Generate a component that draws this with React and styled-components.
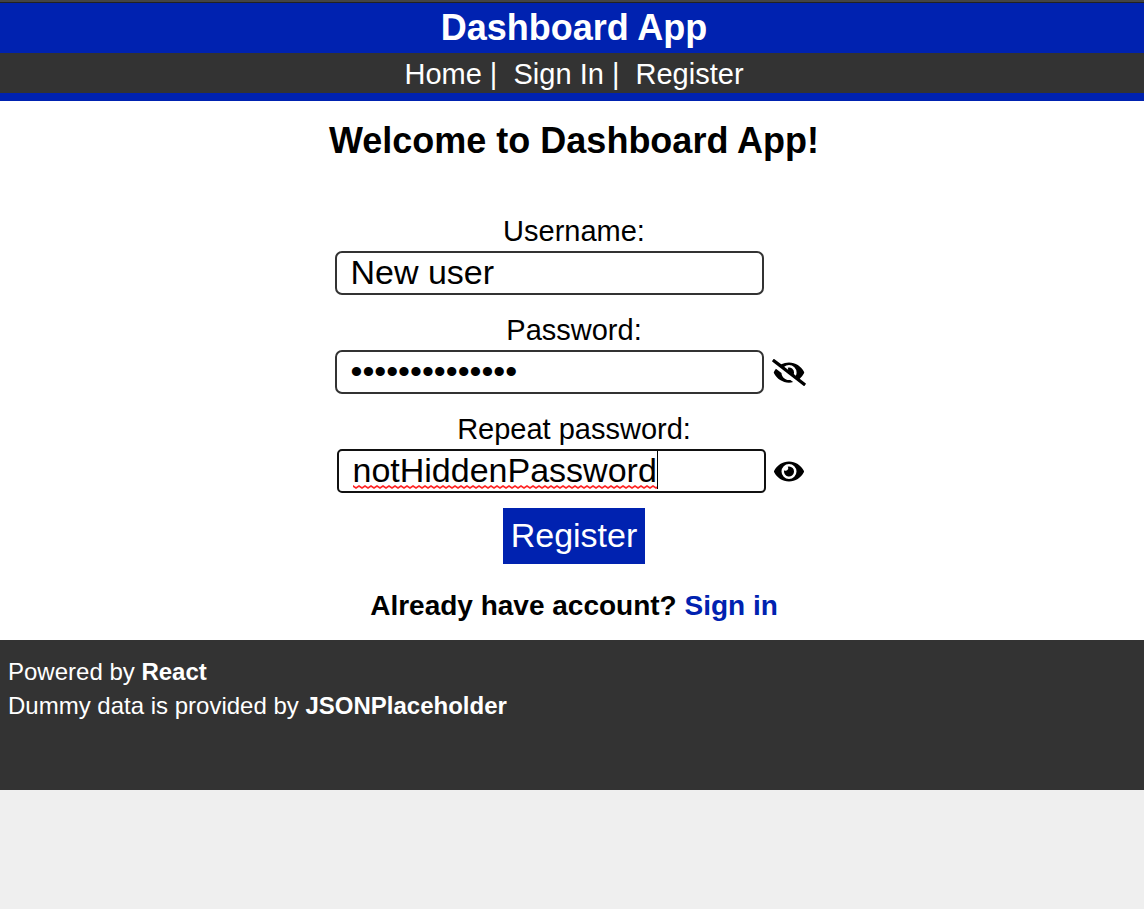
import React, { useState } from "react";
import styled, { createGlobalStyle } from "styled-components";
import { FaEye, FaEyeSlash } from "react-icons/fa";

const blue = "#0022b0";
const dark = "#333333";

const GlobalStyle = createGlobalStyle`
  *, *::before, *::after { box-sizing: border-box; }
  body {
    margin: 0;
    background: #efefef;
    color: #000;
    font-family: "Liberation Sans", Arial, sans-serif;
    font-size: 29px;
  }
`;

const Header = styled.header`
  background: ${blue};
  border-top: 2px solid #444;
  padding-bottom: 8px;
  text-align: center;
  color: #fff;
`;

const Brand = styled.h1`
  margin: 0;
  border-top: 1px solid #222;
  padding-left: 4px;
  font-size: 36px;
  line-height: 50px;
`;

const Nav = styled.nav`
  background: ${dark};
  padding: 2px 0 0 4px;
  line-height: 38px;
`;

const NavLink = styled.a`
  color: #fff;
  text-decoration: none;
`;

const Main = styled.main`
  display: flex;
  flex-direction: column;
  align-items: center;
  padding: 20px 0 17px 4px;
  background: #fff;
`;

const Welcome = styled.h2`
  margin: 0 0 52px;
  font-size: 36px;
  line-height: 40px;
`;

const Form = styled.form`
  display: flex;
  flex-direction: column;
  align-items: center;
  gap: 15px;
`;

const Fields = styled.div`
  display: flex;
  flex-direction: column;
  align-items: center;
  gap: 17px;
`;

const Field = styled.div`
  display: flex;
  flex-direction: column;
  align-items: center;
  gap: 2px;
`;

const Label = styled.label`
  line-height: 36px;
`;

const InputRow = styled.div`
  display: flex;
  align-items: center;
  padding-right: ${(p) => (p.$plain ? "50px" : "0")};
`;

const InputBox = styled.div`
  position: relative;
`;

const Input = styled.input`
  display: block;
  width: 429px;
  max-width: 80vw;
  height: 44px;
  padding: 0 14px 2px;
  border: 2px solid ${(p) => (p.$active ? "#111" : dark)};
  border-radius: ${(p) => (p.$active ? "5px" : "7px")};
  outline: none;
  background: #fff;
  color: #000;
  font: 34px "Liberation Sans", Arial, sans-serif;
`;

const Typing = styled.span`
  position: absolute;
  left: 16px;
  top: 2px;
  display: flex;
  align-items: flex-end;
  height: 38px;
  border-right: 1px solid #000;
  pointer-events: none;
`;

const Toggle = styled.button`
  display: flex;
  padding: 0 8px;
  border: 0;
  background: none;
  color: #000;
  cursor: pointer;

  svg {
    width: ${(p) => (p.$visible ? "30px" : "34px")};
    height: 27px;
  }
`;

const Submit = styled.button`
  height: 56px;
  padding: 0 8px 2px;
  border: 0;
  background: ${blue};
  color: #fff;
  font: 34px "Liberation Sans", Arial, sans-serif;
  cursor: pointer;
`;

const Account = styled.p`
  margin: 25px 0 0;
  font-size: 28px;
  font-weight: bold;
  line-height: 34px;

  a {
    color: ${blue};
    text-decoration: none;
  }
`;

const Footer = styled.footer`
  min-height: 150px;
  padding: 15px 8px;
  background: ${dark};
  color: #fff;
  font-size: 24px;
  line-height: 34px;

  p { margin: 0; }
  a {
    color: #fff;
    font-weight: bold;
    text-decoration: none;
  }
`;

function SpellingMark() {
  return (
    <Typing aria-hidden="true">
      <svg width="304" height="4" viewBox="0 0 304 4">
        <defs>
          <pattern id="wave" width="6" height="4" patternUnits="userSpaceOnUse">
            <path d="M-1 1.7L0 1L3 3L6 1L7 1.7" fill="none" stroke="#f22" strokeWidth="1.6" />
          </pattern>
        </defs>
        <rect width="304" height="4" fill="url(#wave)" />
      </svg>
    </Typing>
  );
}

function PasswordField({ id, label, initial, shown = false, active }) {
  const [value, setValue] = useState(initial);
  const [visible, setVisible] = useState(shown);
  return (
    <Field>
      <Label htmlFor={id}>{label}</Label>
      <InputRow>
        <InputBox>
          <Input
            id={id}
            type={visible ? "text" : "password"}
            value={value}
            $active={active}
            onChange={(e) => setValue(e.target.value)}
          />
          {active && visible && value === initial && <SpellingMark />}
        </InputBox>
        <Toggle
          type="button"
          $visible={visible}
          aria-label={visible ? "Hide password" : "Show password"}
          onClick={() => setVisible(!visible)}
        >
          {visible ? <FaEye /> : <FaEyeSlash />}
        </Toggle>
      </InputRow>
    </Field>
  );
}

export default function App() {
  return (
    <>
      <GlobalStyle />
      <Header>
        <Brand>Dashboard App</Brand>
        <Nav>
          <NavLink href="#home">Home</NavLink> |&nbsp;{" "}
          <NavLink href="#signin">Sign In</NavLink> |&nbsp;{" "}
          <NavLink href="#register">Register</NavLink>
        </Nav>
      </Header>
      <Main>
        <Welcome>Welcome to Dashboard App!</Welcome>
        <Form onSubmit={(e) => e.preventDefault()}>
          <Fields>
            <Field>
              <Label htmlFor="username">Username:</Label>
              <InputRow $plain>
                <Input id="username" type="text" defaultValue="New user" />
              </InputRow>
            </Field>
            <PasswordField id="password" label="Password:" initial="hiddenPassword" />
            <PasswordField
              id="repeat"
              label="Repeat password:"
              initial="notHiddenPassword"
              shown
              active
            />
          </Fields>
          <Submit type="submit">Register</Submit>
        </Form>
        <Account>
          Already have account? <a href="#signin">Sign in</a>
        </Account>
      </Main>
      <Footer>
        <p>
          Powered by <a href="#react">React</a>
        </p>
        <p>
          Dummy data is provided by <a href="#jsonplaceholder">JSONPlaceholder</a>
        </p>
      </Footer>
    </>
  );
}
